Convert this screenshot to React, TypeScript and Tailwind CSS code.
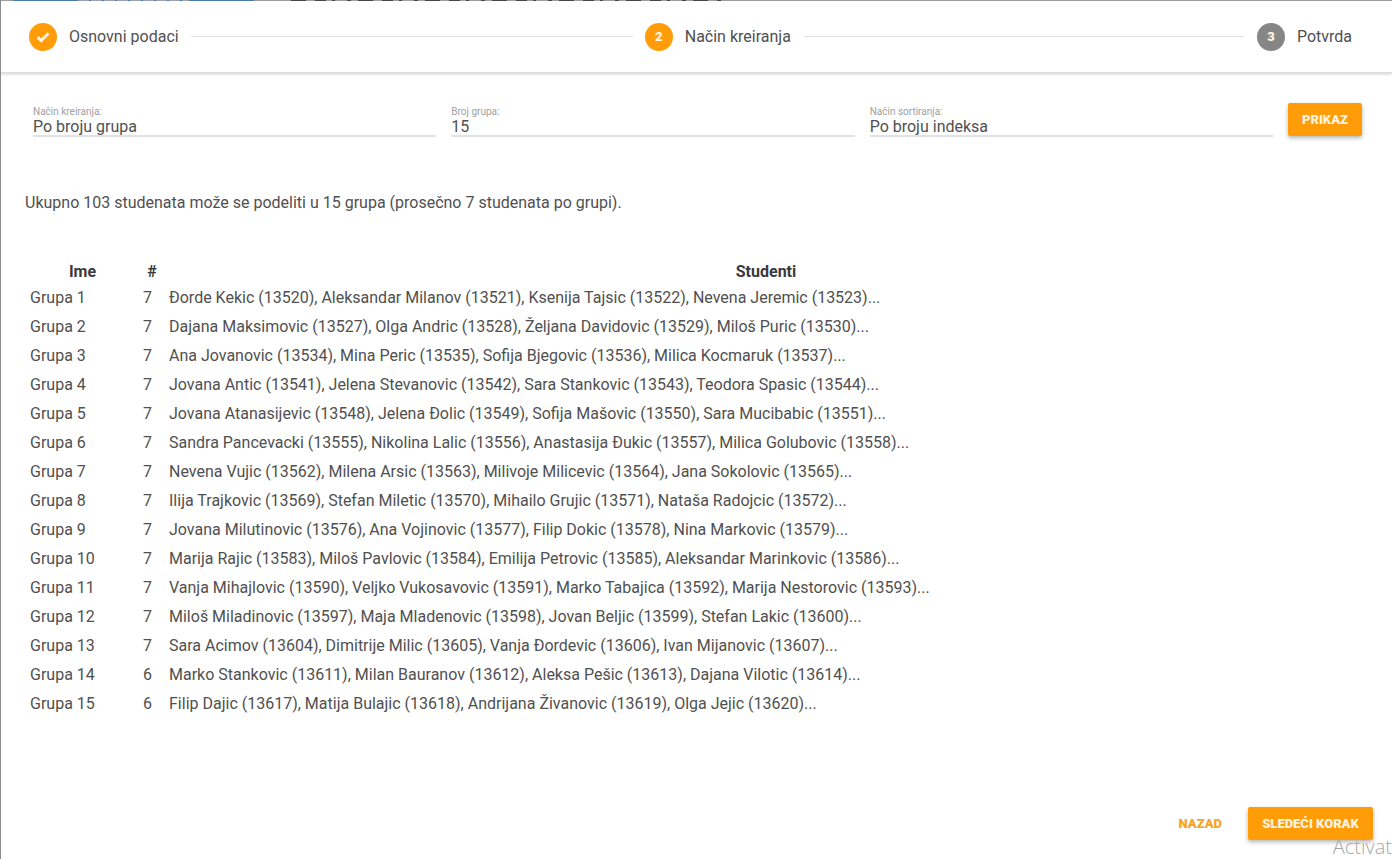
import { Fragment } from "react";

const groups: [number, string][] = [
  [7, "Đorde Kekic (13520), Aleksandar Milanov (13521), Ksenija Tajsic (13522), Nevena Jeremic (13523)..."],
  [7, "Dajana Maksimovic (13527), Olga Andric (13528), Željana Davidovic (13529), Miloš Puric (13530)..."],
  [7, "Ana Jovanovic (13534), Mina Peric (13535), Sofija Bjegovic (13536), Milica Kocmaruk (13537)..."],
  [7, "Jovana Antic (13541), Jelena Stevanovic (13542), Sara Stankovic (13543), Teodora Spasic (13544)..."],
  [7, "Jovana Atanasijevic (13548), Jelena Đolic (13549), Sofija Mašovic (13550), Sara Mucibabic (13551)..."],
  [7, "Sandra Pancevacki (13555), Nikolina Lalic (13556), Anastasija Đukic (13557), Milica Golubovic (13558)..."],
  [7, "Nevena Vujic (13562), Milena Arsic (13563), Milivoje Milicevic (13564), Jana Sokolovic (13565)..."],
  [7, "Ilija Trajkovic (13569), Stefan Miletic (13570), Mihailo Grujic (13571), Nataša Radojcic (13572)..."],
  [7, "Jovana Milutinovic (13576), Ana Vojinovic (13577), Filip Dokic (13578), Nina Markovic (13579)..."],
  [7, "Marija Rajic (13583), Miloš Pavlovic (13584), Emilija Petrovic (13585), Aleksandar Marinkovic (13586)..."],
  [7, "Vanja Mihajlovic (13590), Veljko Vukosavovic (13591), Marko Tabajica (13592), Marija Nestorovic (13593)..."],
  [7, "Miloš Miladinovic (13597), Maja Mladenovic (13598), Jovan Beljic (13599), Stefan Lakic (13600)..."],
  [7, "Sara Acimov (13604), Dimitrije Milic (13605), Vanja Đordevic (13606), Ivan Mijanovic (13607)..."],
  [6, "Marko Stankovic (13611), Milan Bauranov (13612), Aleksa Pešic (13613), Dajana Vilotic (13614)..."],
  [6, "Filip Dajic (13617), Matija Bulajic (13618), Andrijana Živanovic (13619), Olga Jejic (13620)..."],
];

const steps = [
  { label: "Osnovni podaci", done: true, color: "bg-[#ff9c07]" },
  { label: "Način kreiranja", done: false, color: "bg-[#ff9c07]" },
  { label: "Potvrda", done: false, color: "bg-[#868686]" },
];

const fieldLabel = "text-[10px] leading-[13px] text-[#a0a0a0]";
const fieldControl =
  "h-[19px] w-full appearance-none rounded-none border-b-2 border-[#e2e2e2] bg-transparent p-0 text-base leading-[17px] text-[#505050] outline-none";
const raised =
  "h-[33px] rounded-xs bg-[#ff9c07] pt-px text-[13px] font-black text-[#fff3e0] shadow-[0_2px_4px_rgba(0,0,0,0.3)]";

export default function App() {
  return (
    <div className="relative flex min-h-screen flex-col overflow-hidden border-l border-[#8c8c8c] bg-white font-['Roboto',sans-serif] text-base text-[#505050]">
      <div className="h-px bg-[#a3a3a3] pl-3">
        <svg className="block h-px w-[720px]" viewBox="0 0 720 1" preserveAspectRatio="none" aria-hidden="true">
          <rect width="241" height="1" fill="#4a80b0" />
          <path d="M65 .5H176" stroke="#a0aab4" strokeDasharray="11 2" />
          <path d="M278 .5H708" stroke="#484848" strokeDasharray="15 9 11 6 3 12 4 7" />
        </svg>
      </div>

      <header className="flex h-[72px] items-center gap-3 border-b border-[#dedede] pr-10 pl-7 shadow-[0_1px_3px_rgba(0,0,0,0.2)]">
        {steps.map((step, i) => (
          <Fragment key={step.label}>
            {i > 0 && <div className="h-px flex-1 bg-[#e4e4e4]" />}
            <div className="flex items-center gap-3">
              <span className={`flex size-7 items-center justify-center rounded-full text-[13px] font-black text-[#fff3e0] ${step.color}`}>
                {step.done ? (
                  <svg viewBox="0 0 28 28" className="size-7" fill="none" stroke="currentColor" strokeWidth="3" aria-hidden="true">
                    <path d="M8.5 14.2l3.6 3.5 7.4-7.5" />
                  </svg>
                ) : (
                  i + 1
                )}
              </span>
              <span>{step.label}</span>
            </div>
          </Fragment>
        ))}
      </header>

      <main className="flex flex-1 flex-col">
        <form className="flex items-start gap-[15px] pt-[30px] pr-[30px] pl-8" onSubmit={(e) => e.preventDefault()}>
          <div className="flex flex-1 flex-col pt-0.5">
            <label htmlFor="mode" className={fieldLabel}>Način kreiranja:</label>
            <select id="mode" className={fieldControl}>
              <option>Po broju grupa</option>
            </select>
          </div>
          <div className="flex flex-1 flex-col pt-0.5">
            <label htmlFor="count" className={fieldLabel}>Broj grupa:</label>
            <input id="count" defaultValue="15" className={fieldControl} />
          </div>
          <div className="flex flex-1 flex-col pt-0.5">
            <label htmlFor="sort" className={fieldLabel}>Način sortiranja:</label>
            <select id="sort" className={fieldControl}>
              <option>Po broju indeksa</option>
            </select>
          </div>
          <button type="submit" className={`w-[74px] ${raised}`}>PRIKAZ</button>
        </form>

        <p className="mt-[54px] pl-6 leading-6">
          Ukupno 103 studenata može se podeliti u 15 grupa (prosečno 7 studenata po grupi).
        </p>

        <div className="mt-[46px] px-6">
          <table className="w-full table-fixed">
            <colgroup>
              <col className="w-[115px]" />
              <col className="w-6" />
              <col />
            </colgroup>
            <thead>
              <tr className="h-[22px] leading-[22px] text-[#3a3a3a]">
                <th className="p-0 font-bold">Ime</th>
                <th className="p-0 font-bold">#</th>
                <th className="p-0 font-bold">Studenti</th>
              </tr>
            </thead>
            <tbody>
              {groups.map(([count, students], i) => (
                <tr key={i} className="h-[29px]">
                  <td className="pl-[5px]">Grupa {i + 1}</td>
                  <td className="pl-[3px]">{count}</td>
                  <td className="pl-[5px]">{students}</td>
                </tr>
              ))}
            </tbody>
          </table>
        </div>

        <footer className="mt-auto flex justify-end gap-[14px] pr-[19px] pb-[19px]">
          <button type="button" className="h-[33px] px-3 pt-px text-[13px] font-black text-[#f9a426]">NAZAD</button>
          <button type="button" className={`w-[125px] ${raised}`}>SLEDEĆI KORAK</button>
        </footer>
      </main>

      <div className="pointer-events-none absolute right-0 bottom-0 font-['Open_Sans',sans-serif] text-xl leading-6 font-light whitespace-nowrap text-[#a8a8a8]">
        Activat
      </div>
    </div>
  );
}
